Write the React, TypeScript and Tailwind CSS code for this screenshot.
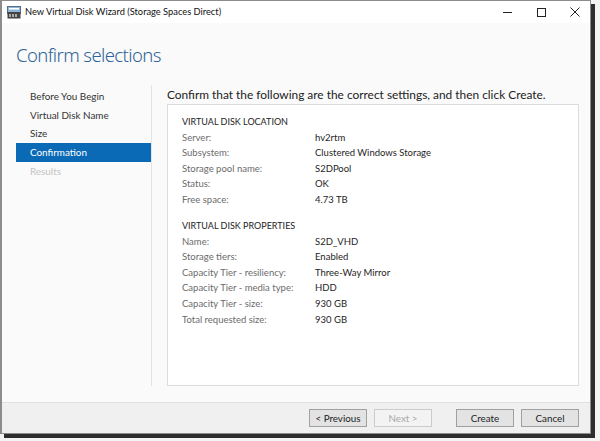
import React from "react";

const font = { fontFamily: 'Lato, "Noto Sans", sans-serif' };
const headFont = { fontFamily: '"Noto Sans", "Open Sans", sans-serif' };

function Row({ label, value }: { label: string; value: string }) {
  return (
    <div className="flex h-[15.6px] items-center">
      <div className="w-[133px] text-[#6b6b6b]">{label}</div>
      <div className="text-[#1e1e1e]">{value}</div>
    </div>
  );
}

export default function App() {
  const nav = ["Before You Begin", "Virtual Disk Name", "Size", "Confirmation", "Results"];
  return (
    <div className="w-[600px] h-[441px] bg-[#f4f4f4] overflow-hidden" style={font}>
      <div className="w-[591px] h-[434px] border border-[#8c8c8c] border-l-2 bg-[#fafafa] flex flex-col shadow-[4px_4px_0_0_#2e2e2e]">
        {/* title bar */}
        <div className="h-[22px] bg-white flex items-center shrink-0">
          <svg width="14" height="13" viewBox="0 0 14 13" className="ml-[5px] mr-[4px]">
            <rect x="0.5" y="0.5" width="13" height="7" fill="#8fb6d8" stroke="#5a6c7c" />
            <rect x="2" y="2" width="10" height="1.5" fill="#ffffff" />
            <rect x="0.5" y="6" width="13" height="6.5" fill="#444" />
            <rect x="2" y="8" width="2" height="3" fill="#aaa" />
            <rect x="5" y="8" width="2" height="3" fill="#aaa" />
            <rect x="8" y="8" width="2" height="3" fill="#aaa" />
          </svg>
          <span className="text-[9.3px] text-[#111]">New Virtual Disk Wizard (Storage Spaces Direct)</span>
          <div className="ml-auto flex items-center h-full">
            <div className="w-[34px] flex justify-center">
              <div className="w-[9px] h-px bg-[#222]" />
            </div>
            <div className="w-[34px] flex justify-center">
              <div className="w-[9px] h-[9px] border border-[#222]" />
            </div>
            <div className="w-[34px] flex justify-center mr-[-2px]">
              <svg width="10" height="10" viewBox="0 0 10 10">
                <path d="M0.5 0.5 L9.5 9.5 M9.5 0.5 L0.5 9.5" stroke="#222" strokeWidth="1" />
              </svg>
            </div>
          </div>
        </div>
        {/* heading */}
        <div className="h-[62px] shrink-0 pl-[14px] pt-[19px]" style={headFont}>
          <div className="text-[18.5px] font-light text-[#2f6496] leading-[26px] tracking-[-0.6px]">Confirm selections</div>
        </div>
        {/* body */}
        <div className="flex h-[317px] shrink-0">
          <div className="w-[150px] border-r border-[#e3e3e3] mb-[16px] pl-[14px] pt-[2px] text-[9.9px]">
            {nav.map((n) => (
              <div
                key={n}
                className={
                  "h-[18.7px] flex items-center pl-[14px] " +
                  (n === "Confirmation"
                    ? "bg-[#0a6ab6] text-white"
                    : n === "Results"
                    ? "text-[#c4c4c4]"
                    : "text-[#333]")
                }
              >
                {n}
              </div>
            ))}
          </div>
          <div className="flex-1 pl-[15px] pr-[11px]">
            <div className="h-[19px] flex items-center text-[11.9px] text-[#222]">
              Confirm that the following are the correct settings, and then click Create.
            </div>
            <div className="h-[282px] border border-[#dcdcdc] bg-white pl-[14px] pt-[8px] text-[9.5px]">
              <div className="h-[17px] flex items-center text-[#222] text-[9px]">VIRTUAL DISK LOCATION</div>
              <Row label="Server:" value="hv2rtm" />
              <Row label="Subsystem:" value="Clustered Windows Storage" />
              <Row label="Storage pool name:" value="S2DPool" />
              <Row label="Status:" value="OK" />
              <Row label="Free space:" value="4.73 TB" />
              <div className="h-[9px]" />
              <div className="h-[17px] flex items-center text-[#222] text-[9px]">VIRTUAL DISK PROPERTIES</div>
              <Row label="Name:" value="S2D_VHD" />
              <Row label="Storage tiers:" value="Enabled" />
              <Row label="Capacity Tier - resiliency:" value="Three-Way Mirror" />
              <Row label="Capacity Tier - media type:" value="HDD" />
              <Row label="Capacity Tier - size:" value="930 GB" />
              <Row label="Total requested size:" value="930 GB" />
            </div>
          </div>
        </div>
        {/* footer */}
        <div className="flex-1 border-t border-[#e0e0e0] bg-[#f0f0f0] flex items-center pr-[11px] text-[9.8px]">
          <div className="ml-auto flex items-center">
            <div className="w-[58px] h-[18px] border border-[#a0a0a0] bg-[#e3e3e3] flex items-center justify-center text-[#222]">
              &lt; Previous
            </div>
            <div className="ml-[7px] w-[58px] h-[18px] border border-[#cccccc] bg-[#f3f3f3] flex items-center justify-center text-[#a8a8a8]">
              Next &gt;
            </div>
            <div className="ml-[24px] w-[58px] h-[18px] border border-[#a0a0a0] bg-[#e3e3e3] flex items-center justify-center text-[#222]">
              Create
            </div>
            <div className="ml-[7px] w-[58px] h-[18px] border border-[#a0a0a0] bg-[#e3e3e3] flex items-center justify-center text-[#222]">
              Cancel
            </div>
          </div>
        </div>
      </div>
    </div>
  );
}
